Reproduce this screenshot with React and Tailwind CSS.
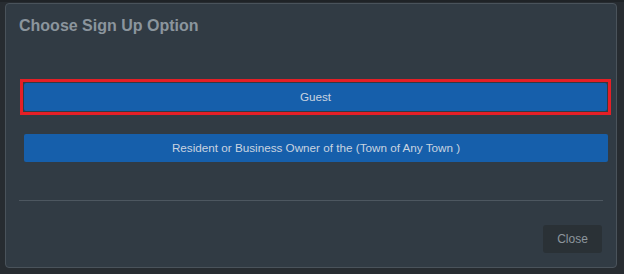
import React from "react"

const font = { fontFamily: '"Liberation Sans", Arial, sans-serif' }

export default function App() {
  return (
    <div className="w-[624px] h-[274px] bg-[#272c31] border-t-[2px] border-[#1f2327] overflow-hidden" style={font}>
      <div className="mt-[1px] ml-[5px] w-[612px] h-[265px] bg-[#313b44] border border-[#4a535b] rounded-[4px] flex flex-col">
        <div className="pt-[13px] pl-[13px]">
          <h4 className="text-[16px] leading-[18px] font-bold text-[#8b959d]">Choose Sign Up Option</h4>
        </div>
        {/* focused guest button */}
        <div className="mt-[44px] ml-[14px] w-[591px] p-[1px] border-[3px] border-[#e51f26]">
          <button className="w-full h-[28px] bg-[#165fab] rounded-[2px] text-[11.7px] text-[#c9d4e0]">
            Guest
          </button>
        </div>
        <button className="mt-[19px] ml-[18px] w-[584px] h-[28px] bg-[#165fab] rounded-[2px] text-[11.7px] text-[#c9d4e0]">
          Resident or Business Owner of the (Town of Any Town )
        </button>
        <div className="mt-[38px] mx-[13px] h-px bg-[#4d5760]" />
        <button className="mt-[24px] self-end mr-[14px] w-[59px] h-[28px] bg-[#2a3136] rounded-[3px] text-[12px] text-[#8d969d]">
          Close
        </button>
      </div>
    </div>
  )
}
